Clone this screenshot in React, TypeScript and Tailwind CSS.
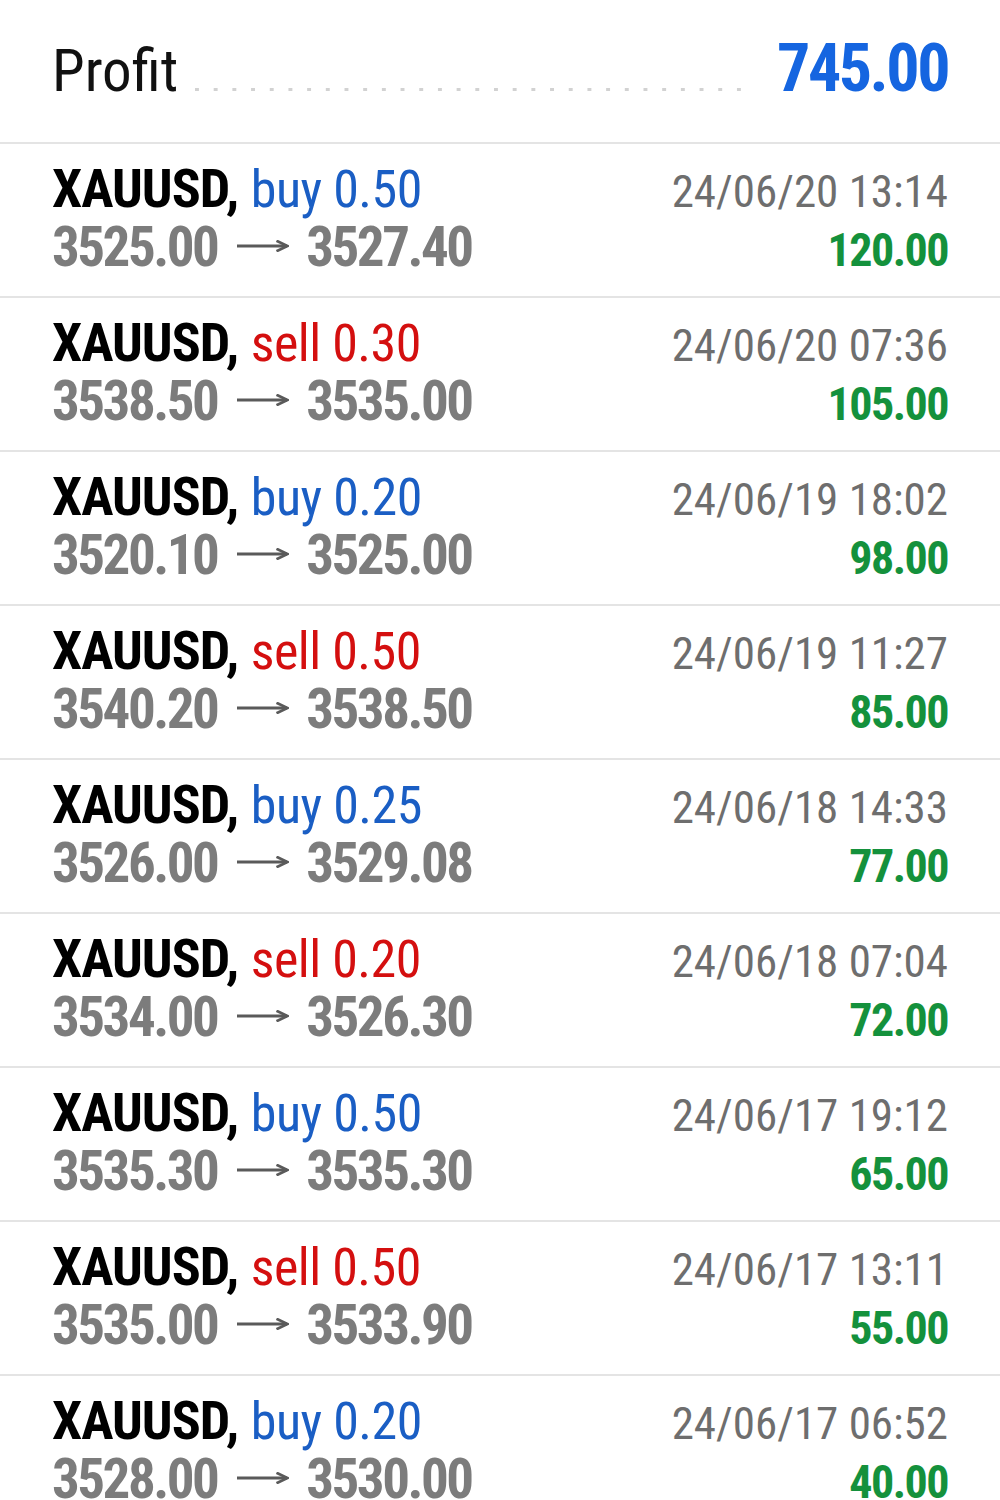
import React from 'react';

type Deal = {
  side: 'buy' | 'sell';
  volume: string;
  open: string;
  close: string;
  time: string;
  profit: string;
};

const deals: Deal[] = [
  { side: 'buy', volume: '0.50', open: '3525.00', close: '3527.40', time: '24/06/20 13:14', profit: '120.00' },
  { side: 'sell', volume: '0.30', open: '3538.50', close: '3535.00', time: '24/06/20 07:36', profit: '105.00' },
  { side: 'buy', volume: '0.20', open: '3520.10', close: '3525.00', time: '24/06/19 18:02', profit: '98.00' },
  { side: 'sell', volume: '0.50', open: '3540.20', close: '3538.50', time: '24/06/19 11:27', profit: '85.00' },
  { side: 'buy', volume: '0.25', open: '3526.00', close: '3529.08', time: '24/06/18 14:33', profit: '77.00' },
  { side: 'sell', volume: '0.20', open: '3534.00', close: '3526.30', time: '24/06/18 07:04', profit: '72.00' },
  { side: 'buy', volume: '0.50', open: '3535.30', close: '3535.30', time: '24/06/17 19:12', profit: '65.00' },
  { side: 'sell', volume: '0.50', open: '3535.00', close: '3533.90', time: '24/06/17 13:11', profit: '55.00' },
  { side: 'buy', volume: '0.20', open: '3528.00', close: '3530.00', time: '24/06/17 06:52', profit: '40.00' },
];

const font = "font-['Roboto_Condensed','Liberation_Sans_Narrow',Roboto,sans-serif]";

function Arrow() {
  return (
    <svg
      className="inline-block align-[14px] ml-[20px] mr-[17px]"
      width="52"
      height="12"
      viewBox="0 0 52 12"
      fill="none"
      stroke="#5a5a5a"
      strokeWidth={2.8}
    >
      <path d="M0 6H50" />
      <path d="M39.5 0.8L50.5 6L39.5 11.2" strokeLinejoin="miter" />
    </svg>
  );
}

export default function App() {
  return (
    <div className={`w-[1000px] h-[1500px] overflow-hidden bg-white ${font}`}>
      {/* 合計 */}
      <div className="flex items-baseline h-[144px] px-[52px] pt-[29px] border-b-2 border-[#e4e4e4]">
        <span className="text-[59px] leading-[80px] text-[#111]">Profit</span>
        <div className="flex-1 ml-[17px] mr-[25px] h-[3px] bg-[linear-gradient(to_right,#d2d2d2_0_4px,transparent_4px)] bg-[length:18.7px_3px] bg-repeat-x" />
        <span className="text-[66px] leading-[80px] font-bold tracking-[-2.5px] text-[#1565e0]">745.00</span>
      </div>

      {/* 取引一覧 */}
      {deals.map((d, i) => (
        <div key={i} className="px-[52px] pt-[15px] pb-[19px] border-b-2 border-[#e4e4e4]">
          <div className="flex items-baseline justify-between h-[59px]">
            <div className="text-[54px] leading-[59px]">
              <span className="font-bold tracking-[-1px] text-black">XAUUSD,</span>{' '}
              <span
                className={`text-[52px] tracking-[-0.5px] ${d.side === 'buy' ? 'text-[#1a5ec4]' : 'text-[#d40f0f]'}`}
              >
                {d.side} {d.volume}
              </span>
            </div>
            <span className="text-[45px] leading-[59px] text-[#6e6e6e]">{d.time}</span>
          </div>
          <div className="flex items-baseline justify-between h-[59px]">
            <div className="text-[55px] leading-[59px] font-bold tracking-[-2.5px] text-[#7c7c7c]">
              <span>{d.open}</span>
              <Arrow />
              <span>{d.close}</span>
            </div>
            <span className="text-[46px] leading-[59px] font-bold tracking-[-1.5px] text-[#14913c]">{d.profit}</span>
          </div>
        </div>
      ))}
    </div>
  );
}
